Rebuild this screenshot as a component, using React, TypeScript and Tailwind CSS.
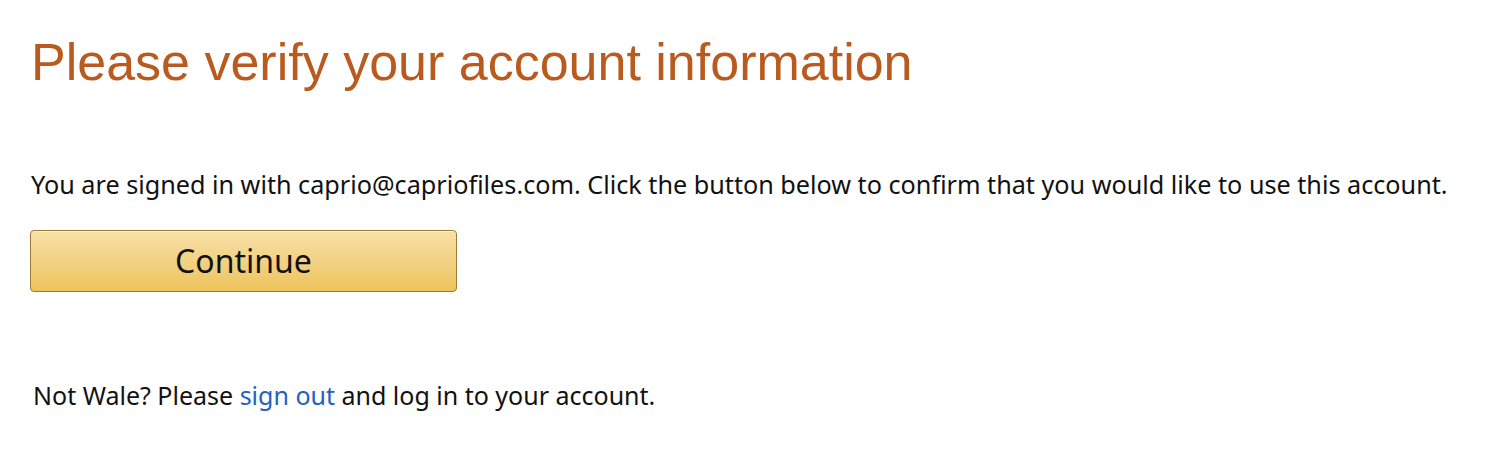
export default function App() {
  return (
    <div className="min-h-[462px] bg-white px-[31px] pt-[32px] text-[#111]">
      <h1 className="text-[52px] leading-[60px] text-[#b95a1f] font-['Liberation_Sans',Arial,sans-serif]">
        Please verify your account information
      </h1>

      <p className="mt-[76px] text-[25.2px] leading-[32px] font-['Noto_Sans',sans-serif]">
        You are signed in with caprio@capriofiles.com. Click the button below to confirm that you would like to use this account.
      </p>

      <button className="mt-[30px] -ml-[1px] block w-[427px] h-[62px] rounded-[4px] border border-[#9a7c33] bg-gradient-to-b from-[#f7e0a8] to-[#eec35a] shadow-[inset_0_1px_0_rgba(255,255,255,0.6)] text-[32px] leading-none text-[#111] font-['Noto_Sans',sans-serif]">
        Continue
      </button>

      <p className="mt-[87px] ml-[2px] text-[25px] leading-[32px] font-['Noto_Sans',sans-serif]">
        Not Wale? Please{" "}
        <a href="#" className="text-[#2162c0]">
          sign out
        </a>{" "}
        and log in to your account.
      </p>
    </div>
  );
}
